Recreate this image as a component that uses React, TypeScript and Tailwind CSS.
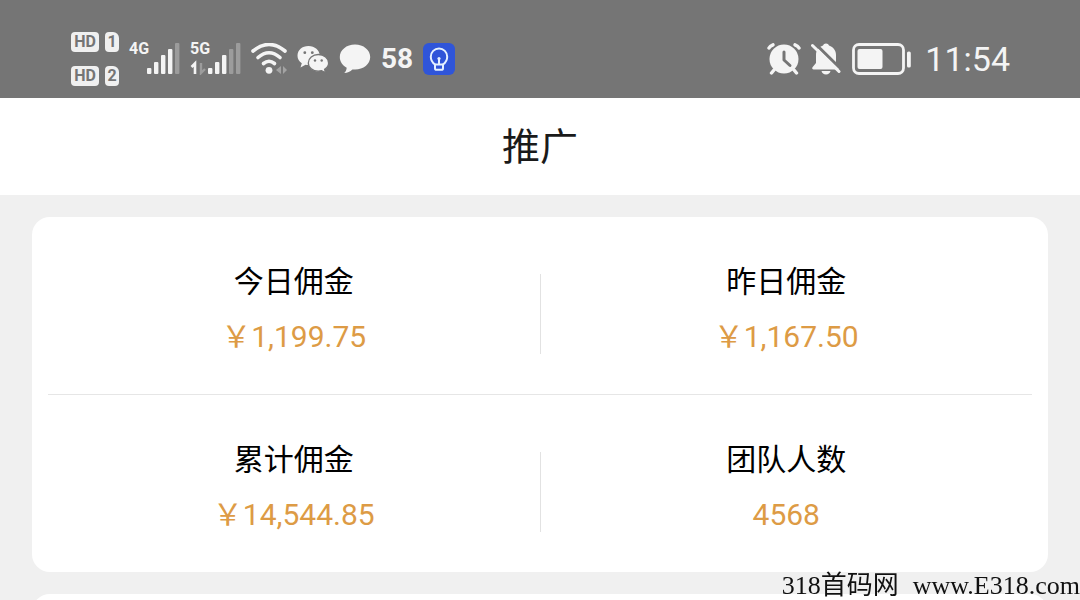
import type { ReactNode } from "react";

type SignalProps = {
  label: string;
  /** How many of the five bars are lit. */
  level: number;
  children?: ReactNode;
};

const BARS = [
  { x: 18, y: 25, h: 6 },
  { x: 25, y: 19, h: 12 },
  { x: 32, y: 12, h: 19 },
  { x: 39, y: 6, h: 25 },
  { x: 46, y: 0, h: 31 },
];

function Signal({ label, level, children }: SignalProps) {
  return (
    <div className="relative">
      <svg className="block h-8 w-[51px]" viewBox="0 0 51 32" aria-hidden="true">
        {BARS.map((bar, i) => (
          <rect
            key={bar.x}
            x={bar.x}
            y={bar.y}
            width="4.4"
            height={bar.h}
            rx="1"
            fill={i < level ? "#f4f4f4" : "#9c9c9c"}
          />
        ))}
        {children}
      </svg>
      <span className="absolute top-0 left-0 font-['Roboto',sans-serif] text-base leading-3 font-bold">
        {label}
      </span>
    </div>
  );
}

function HdBadge({ slot }: { slot: string }) {
  return (
    <div className="flex gap-1.5 font-['Roboto',sans-serif] text-base leading-5 font-bold text-[#757575]">
      <span className="w-7 rounded-sm bg-[#f0f0f0] text-center">HD</span>
      <span className="w-3.5 rounded-sm rounded-tr-md bg-[#f0f0f0] text-center">{slot}</span>
    </div>
  );
}

function WifiIcon() {
  return (
    <svg className="h-8 w-9" viewBox="0 0 36 32" aria-hidden="true">
      <g fill="none" stroke="#f4f4f4" strokeWidth="3.6" strokeLinecap="round">
        <path d="M2 8Q18 -5 34 8" />
        <path d="M7 14.5Q18 5 29 14.5" />
        <path d="M12.5 20.5Q18 16 23.5 20.5" />
      </g>
      <circle cx="18" cy="27.3" r="3.4" fill="#f4f4f4" />
      <path d="M30 23v8l-5-4zM32 23v8l4-4z" fill="#a3a3a3" />
    </svg>
  );
}

function WechatIcon() {
  return (
    <svg className="h-8 w-8" viewBox="0 0 32 32" aria-hidden="true">
      <path
        d="M11.5 3C5 3 .5 7.2.5 12.7c0 3.2 1.6 5.800 4.300 7.500L3.500 24.500l5-2.700c1 .3 2 .3 3 .3 6.300 0 11.200-4.200 11.200-9.500S17.800 3 11.500 3z"
        fill="#f4f4f4"
      />
      <path
        d="M21.300 11.500c-5.600 0-10 3.700-10 8.400s4.400 8.300 10 8.300c1.200 0 2.300-.2 3.300-.5l4 2.200-1-3.600c2.400-1.500 4-3.800 4-6.400 0-4.700-4.600-8.400-10.300-8.400z"
        fill="#f4f4f4"
        stroke="#757575"
        strokeWidth="1.3"
      />
      <g fill="#757575">
        <circle cx="7.8" cy="9.7" r="1.4" />
        <circle cx="15.3" cy="9.7" r="1.4" />
        <circle cx="18" cy="17.5" r="1.2" />
        <circle cx="24.7" cy="17.5" r="1.2" />
      </g>
    </svg>
  );
}

function ChatIcon() {
  return (
    <svg className="h-8 w-8" viewBox="0 0 32 32" aria-hidden="true">
      <path
        d="M16 1.5C7.500 1.500.8 7 .8 14c0 4.700 2.700 8.500 6.900 10.700-.2 2.200-1 3.900-2.500 5.400 3.300-.2 6-1.500 8.200-3.700.9.100 1.700.2 2.600.2 8.500 0 15.200-5.600 15.200-12.600S24.500 1.500 16 1.500z"
        fill="#f4f4f4"
      />
    </svg>
  );
}

function BulbIcon() {
  return (
    <svg className="h-8 w-8" viewBox="0 0 32 32" aria-hidden="true">
      <rect width="32" height="32" rx="6" fill="#2f55d9" />
      <g fill="none" stroke="#e4f1ff" strokeWidth="2" strokeLinecap="round" strokeLinejoin="round">
        <path d="M12 21.5C9.300 19.500 7.800 16.500 7.800 13.700a8.200 8.200 0 0 1 16.400 0c0 2.800-1.500 5.800-4.200 7.800z" />
        <path d="M12 21.5v3.700c0 1 .6 1.600 1.600 1.600h4.800c1 0 1.600-.6 1.600-1.600v-3.700" />
        <path d="M16 16v4.5" />
      </g>
      <circle cx="16" cy="15.5" r="1.6" fill="#e4f1ff" />
    </svg>
  );
}

function AlarmIcon() {
  return (
    <svg className="h-8 w-[34px]" viewBox="0 0 34 32" aria-hidden="true">
      <circle cx="17" cy="16" r="14.5" fill="#f4f4f4" />
      <g fill="none" stroke="#f4f4f4" strokeWidth="3.4" strokeLinecap="round">
        <path d="M2 5Q3 3 6 1.8M32 5Q31 3 28 1.8" />
        <path d="M7 27l-2.500 3M27 27l2.500 3" />
      </g>
      <path d="M17 9v8l6 5.500" fill="none" stroke="#757575" strokeWidth="3" strokeLinecap="round" strokeLinejoin="round" />
    </svg>
  );
}

function MutedBellIcon() {
  return (
    <svg className="h-8 w-[30px]" viewBox="0 0 30 32" aria-hidden="true">
      <path
        d="M15 .5c-1.500 0-2.500.8-3 2C7.500 4 5 7.500 5 12v8l-3.500 4.200c-.7 1-.2 2.300 1.200 2.300h24.600c1.400 0 1.900-1.300 1.200-2.300L25 20v-8c0-4.500-2.500-8-7-9.500-.5-1.200-1.500-2-3-2z"
        fill="#f4f4f4"
      />
      <path d="M10.500 28h9c-.5 2.200-2.200 3.500-4.500 3.500s-4-1.300-4.500-3.500z" fill="#f4f4f4" />
      <path d="M3 -.5L31 27" stroke="#757575" strokeWidth="3" />
      <path d="M1.500 2.500L28 28.500" stroke="#f4f4f4" strokeWidth="3" strokeLinecap="round" />
    </svg>
  );
}

function BatteryIcon() {
  return (
    <svg className="h-8 w-[60px]" viewBox="0 0 60 32" aria-hidden="true">
      <rect x="2.5" y="1.5" width="50" height="29" rx="5.5" fill="none" stroke="#f4f4f4" strokeWidth="2.8" />
      <rect x="6.5" y="6" width="25" height="20" rx="2" fill="#f4f4f4" />
      <rect x="56" y="8.5" width="3.8" height="16" rx="1.6" fill="#f4f4f4" />
    </svg>
  );
}

function StatusBar() {
  return (
    <div className="flex h-[98px] shrink-0 items-center justify-between bg-[#757575] pt-5 pr-[70px] pl-[71px] text-[#f4f4f4]">
      <div className="flex items-center gap-2.5">
        <div className="flex flex-col gap-3.5">
          <HdBadge slot="1" />
          <HdBadge slot="2" />
        </div>
        <Signal label="4G" level={4} />
        <Signal label="5G" level={3}>
          <path d="M5 31V20.5L1.5 24" fill="none" stroke="#f4f4f4" strokeWidth="2.6" />
          <path d="M11 20v10l4-4" fill="none" stroke="#9c9c9c" strokeWidth="2.4" />
        </Signal>
        <WifiIcon />
        <WechatIcon />
        <ChatIcon />
        <span className="font-['Roboto',sans-serif] text-[28px] leading-8 font-bold">58</span>
        <BulbIcon />
      </div>
      <div className="flex items-center gap-2.5">
        <AlarmIcon />
        <MutedBellIcon />
        <BatteryIcon />
        <time className="pl-1 font-['Roboto',sans-serif] text-[34px] leading-8">11:54</time>
      </div>
    </div>
  );
}

const STATS = [
  [
    { label: "今日佣金", value: "￥1,199.75" },
    { label: "昨日佣金", value: "￥1,167.50" },
  ],
  [
    { label: "累计佣金", value: "￥14,544.85" },
    { label: "团队人数", value: "4568" },
  ],
];

function Stat({ label, value }: { label: string; value: string }) {
  return (
    <div className="flex flex-1 flex-col items-center gap-[18px]">
      <dt className="text-[30px] leading-10 text-black">{label}</dt>
      <dd className="font-['Roboto','Noto_Sans_CJK_SC',sans-serif] text-[30px] leading-10 text-[#dd9b45]">
        {value}
      </dd>
    </div>
  );
}

export default function App() {
  return (
    <div className="flex h-screen flex-col overflow-hidden bg-[#f0f0f0] font-['Noto_Sans_CJK_SC',sans-serif]">
      <StatusBar />
      <header className="flex h-[97px] shrink-0 items-center justify-center bg-white pb-1.5">
        <h1 className="text-[38px] leading-[56px] text-[#1a1a1a]">推广</h1>
      </header>
      <main className="flex flex-col gap-[22px] px-8 pt-[22px]">
        <section className="rounded-[18px] bg-white px-4">
          {STATS.map((row, i) => (
            <dl
              key={i}
              className="flex items-center border-[#e6e6e6] pt-[42px] pb-[37px] not-last:border-b"
            >
              <Stat {...row[0]} />
              <div className="mt-3 h-20 w-px bg-[#e2e2e2]" />
              <Stat {...row[1]} />
            </dl>
          ))}
        </section>
        <section className="h-20 rounded-[18px] bg-white" />
      </main>
      <p className="fixed right-0 bottom-0 flex items-baseline gap-3.5 font-['Liberation_Serif','Noto_Sans_CJK_SC',serif] text-[26px] leading-7 whitespace-nowrap text-[#111]">
        <span>318首码网</span>
        <span>www.E318.com</span>
      </p>
    </div>
  );
}
